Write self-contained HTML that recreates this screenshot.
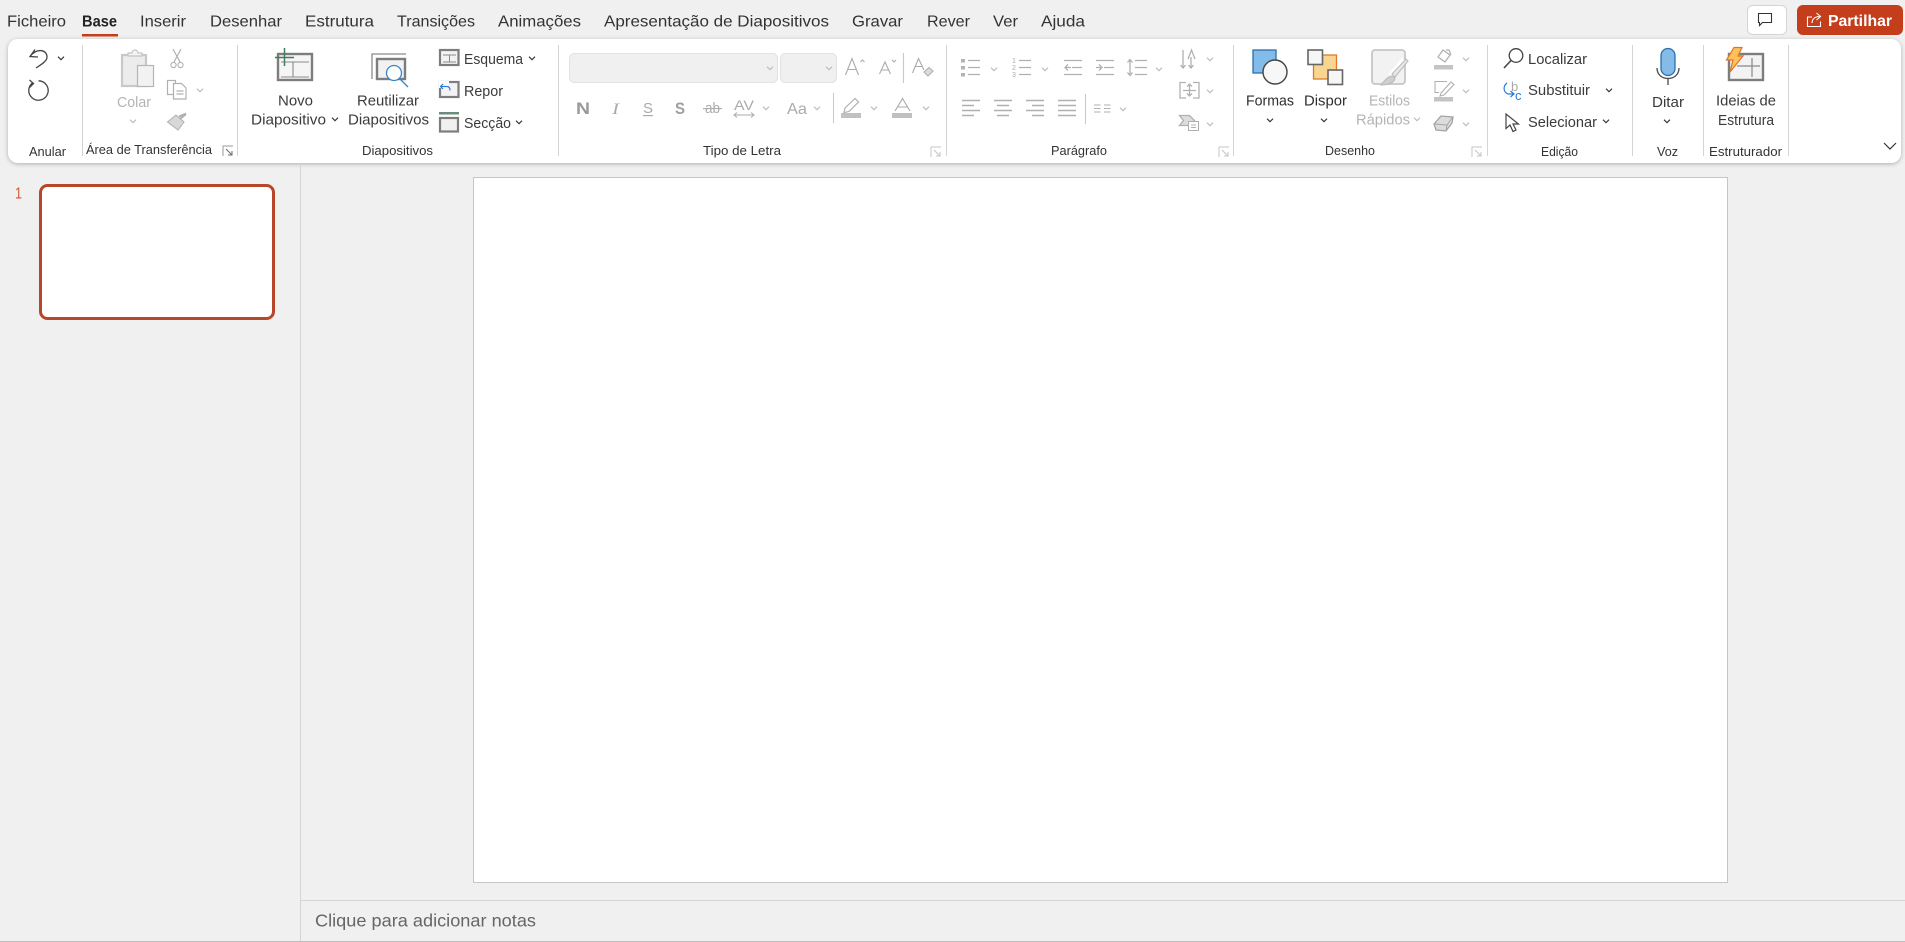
<!DOCTYPE html>
<html lang="pt"><head><meta charset="utf-8"><title>PowerPoint</title>
<style>
html,body{margin:0;padding:0;background:#f0f0f0;width:1905px;height:942px;overflow:hidden}
svg{display:block}
text{font-family:"Liberation Sans",sans-serif;font-size:15px;fill:#3b3b3b}
.tab{font-size:16px;fill:#333}
.g{font-size:13px;fill:#333}
.d{fill:#ababab}
</style></head><body>
<svg width="1905" height="942" viewBox="0 0 1905 942" xmlns="http://www.w3.org/2000/svg">
<defs>
<path id="c" d="M-3-1.300 0 1.700 3-1.300" fill="none" stroke-width="1.100"/>
<g id="l" fill="none" stroke="#9a9a9a" stroke-width="1"><path d="M-5 5V-5H5"/><path d="M-2-2 4 4M4 0V4H0" stroke="#6a6a6a"/></g>
<g id="ld" fill="none" stroke="#c4c4c4" stroke-width="1"><path d="M-5 5V-5H5"/><path d="M-2-2 4 4M4 0V4H0"/></g>
<filter id="s" x="-2%" y="-20%" width="104%" height="140%"><feDropShadow dx="0" dy="1" stdDeviation="2" flood-color="#000" flood-opacity=".28"/></filter>
</defs>
<rect width="1905" height="942" fill="#f0f0f0"/>

<!-- tabs -->
<text class="tab" x="7" y="26.500" textLength="59" lengthAdjust="spacingAndGlyphs">Ficheiro</text>
<text class="tab" x="82" y="26.500" textLength="35" lengthAdjust="spacingAndGlyphs" font-weight="700" style="fill:#222">Base</text>
<text class="tab" x="140" y="26.500" textLength="46" lengthAdjust="spacingAndGlyphs">Inserir</text>
<text class="tab" x="210" y="26.500" textLength="72" lengthAdjust="spacingAndGlyphs">Desenhar</text>
<text class="tab" x="305" y="26.500" textLength="69" lengthAdjust="spacingAndGlyphs">Estrutura</text>
<text class="tab" x="397" y="26.500" textLength="78" lengthAdjust="spacingAndGlyphs">Transições</text>
<text class="tab" x="498" y="26.500" textLength="83" lengthAdjust="spacingAndGlyphs">Animações</text>
<text class="tab" x="604" y="26.500" textLength="225" lengthAdjust="spacingAndGlyphs">Apresentação de Diapositivos</text>
<text class="tab" x="852" y="26.500" textLength="51" lengthAdjust="spacingAndGlyphs">Gravar</text>
<text class="tab" x="927" y="26.500" textLength="43" lengthAdjust="spacingAndGlyphs">Rever</text>
<text class="tab" x="993" y="26.500" textLength="25" lengthAdjust="spacingAndGlyphs">Ver</text>
<text class="tab" x="1041" y="26.500" textLength="44" lengthAdjust="spacingAndGlyphs">Ajuda</text>
<rect x="82" y="34" width="36" height="2.500" fill="#c43e1c"/>

<!-- comment + share -->
<rect x="1747.500" y="5.500" width="39" height="29" rx="5" fill="#fff" stroke="#d5d5d5"/>
<path d="M1758.500 13.500h13v9h-9l-3 3v-3h-1z" fill="none" stroke="#333" stroke-width="1.100"/>
<rect x="1797" y="5" width="106" height="30" rx="6" fill="#c43e1c"/>
<path d="M1812 17h-4.500v9.500h13v-5M1812 23c0-4 3-6.500 7.500-6.500M1816.500 13l4 3.500-4 3.500" fill="none" stroke="#fff" stroke-width="1.100"/>
<text x="1828" y="26" textLength="64" lengthAdjust="spacingAndGlyphs" font-weight="700" style="fill:#fff;font-size:15.500px">Partilhar</text>

<!-- ribbon -->
<rect x="8" y="39" width="1893" height="124" rx="10" fill="#fff" filter="url(#s)"/>
<g stroke="#d4d4d4" stroke-width="1">
<path d="M82.500 45V156M237.500 45V156M558.500 45V156M946.500 45V156M1233.500 45V156M1487.500 45V156M1632.500 45V156M1703.500 45V156M1788.500 45V156"/>
</g>

<!-- Anular -->
<path d="M35 49.500 30 56.500 38 57M30 56.500C36 48 47 49 47 57 47 61 42 64 36 68" fill="none" stroke="#444" stroke-width="1.300"/>
<use href="#c" x="61" y="58" stroke="#333"/>
<path d="M33 82.500A9.700 9.700 0 1 0 38.500 80.800M29.500 80 33.500 83.500 29.500 87.500" fill="none" stroke="#444" stroke-width="1.300"/>
<text class="g" x="29" y="156" textLength="37" lengthAdjust="spacingAndGlyphs">Anular</text>

<!-- Area de transferencia -->
<rect x="122" y="55" width="24" height="31" fill="#ececec" stroke="#c8c8c8" stroke-width="2.200"/>
<path d="M128 56v-3h4a3 3 0 0 1 6 0h4v3z" fill="#f4f4f4" stroke="#c4c4c4" stroke-width="1.200"/>
<rect x="137.500" y="65.500" width="16" height="21" fill="#f2f2f2" stroke="#b5b5b5" stroke-width="1.200"/>
<text class="d" x="117" y="107" textLength="34" lengthAdjust="spacingAndGlyphs" style="fill:#b4b4b4">Colar</text>
<use href="#c" x="133" y="121" stroke="#bcbcbc"/>
<path d="M173 49 180 62M181 49 174 62" fill="none" stroke="#b0b0b0" stroke-width="1.200"/>
<circle cx="173.500" cy="65" r="2.600" fill="none" stroke="#b0b0b0" stroke-width="1.100"/><circle cx="180.500" cy="65" r="2.600" fill="none" stroke="#b0b0b0" stroke-width="1.100"/>
<path d="M173 94.500h-5.500V80.500h8v3M173.500 83.500h8l4.500 4.500v11h-12.500zM176.500 91h7M176.500 94h7" fill="#fff" stroke="#b0b0b0" stroke-width="1.200"/>
<use href="#c" x="200" y="90" stroke="#bcbcbc"/>
<path d="M167.500 122 176 115 184 122 178 130z" fill="#d8d8d8" stroke="#b0b0b0"/><path d="M179 116.500 186 113.500M180 119 186 114" stroke="#b0b0b0" stroke-width="2" fill="none"/>
<text class="g" x="86" y="154" textLength="126" lengthAdjust="spacingAndGlyphs">Área de Transferência</text>
<use href="#l" x="228" y="151"/>

<!-- Diapositivos -->
<rect x="278" y="54" width="34" height="26" fill="#f5f5f5" stroke="#7d7d7d" stroke-width="2.400"/>
<path d="M281 62h28M293 62v15M281 77h28" fill="none" stroke="#8a8a8a" stroke-width="1.100"/>
<path d="M284.500 48V66M275 57.500H294" stroke="#3f7d63" stroke-width="1.500" fill="none"/>
<text x="278" y="105.500" textLength="35" lengthAdjust="spacingAndGlyphs">Novo</text>
<text x="251" y="124.500" textLength="75" lengthAdjust="spacingAndGlyphs">Diapositivo</text>
<use href="#c" x="335" y="119" stroke="#333"/>
<path d="M406 54H372V79" fill="none" stroke="#8a8a8a" stroke-width="1.300"/>
<rect x="377" y="59" width="28" height="20" fill="#f2f2f2" stroke="#7d7d7d" stroke-width="2.400"/>
<circle cx="394" cy="73" r="7.500" fill="#fff" stroke="#3a86c8" stroke-width="1.300"/><path d="M399.500 78.500 408 87" stroke="#3a86c8" stroke-width="1.300"/>
<text x="357" y="105.500" textLength="62" lengthAdjust="spacingAndGlyphs">Reutilizar</text>
<text x="348" y="124.500" textLength="81" lengthAdjust="spacingAndGlyphs">Diapositivos</text>
<rect x="440" y="50" width="18.500" height="15" fill="#f3f3f3" stroke="#7d7d7d" stroke-width="2.200"/><path d="M443 55h13M449.500 55v7M443 62h13" stroke="#888" fill="none"/>
<text x="464" y="64" textLength="59" lengthAdjust="spacingAndGlyphs">Esquema</text><use href="#c" x="532" y="58" stroke="#333"/>
<rect x="440" y="82" width="18.500" height="15" fill="#f3f3f3" stroke="#7d7d7d" stroke-width="2.200"/>
<path d="M439 81h10v7h-10z" fill="#fff"/><path d="M443 84 440.500 86.500 443 89M441 86.500h6c2 0 3 1.500 3 4" fill="none" stroke="#2b7cd3" stroke-width="1.200"/>
<text x="464" y="96" textLength="39" lengthAdjust="spacingAndGlyphs">Repor</text>
<rect x="439" y="112" width="20" height="2.500" fill="#6c8c7c"/><rect x="440" y="118" width="18" height="13.500" fill="#f0f0f0" stroke="#7d7d7d" stroke-width="2.200"/>
<text x="464" y="128" textLength="47" lengthAdjust="spacingAndGlyphs">Secção</text><use href="#c" x="519" y="122" stroke="#333"/>
<text class="g" x="362" y="155" textLength="71" lengthAdjust="spacingAndGlyphs">Diapositivos</text>

<!-- Tipo de letra -->
<rect x="569.500" y="53.500" width="208" height="29" rx="5" fill="#f0f0f0" stroke="#e2e2e2"/>
<rect x="780.500" y="53.500" width="56" height="29" rx="5" fill="#f0f0f0" stroke="#e2e2e2"/>
<use href="#c" x="770" y="68" stroke="#bcbcbc"/><use href="#c" x="829" y="68" stroke="#bcbcbc"/>
<g fill="none" stroke="#ababab" stroke-width="1.100">
<path d="M845.500 75 852 58.500 858.500 75M848 69.500H856M860.500 62 862.500 60 864.500 62"/>
<path d="M879.500 74 885 62 890.500 74M881.500 70H888.500M892 60 894 62 896 60"/>
<path d="M903.500 53V83" stroke="#c8c8c8"/>
<path d="M912.500 73 918.500 58.500 924 70M915 66.500H922"/>
</g>
<path d="M924 72 929 67.500 933 71 928 76z" fill="#dcdcdc" stroke="#ababab"/>
<text x="576" y="114" font-weight="700" textLength="14" lengthAdjust="spacingAndGlyphs" style="font-size:17px;fill:#9a9a9a">N</text>
<text class="d" x="612" y="114" font-style="italic" textLength="7" lengthAdjust="spacingAndGlyphs" style="font-size:16px;font-family:'Liberation Serif',serif">I</text>
<text class="d" x="643" y="113" textLength="10" lengthAdjust="spacingAndGlyphs" style="font-size:15px">S</text><rect x="643" y="115" width="10" height="1.200" fill="#ababab"/>
<text x="675" y="114" font-weight="700" textLength="10" lengthAdjust="spacingAndGlyphs" style="font-size:17px;fill:#9f9f9f">S</text>
<text class="d" x="705" y="113" textLength="15" lengthAdjust="spacingAndGlyphs" style="font-size:15px">ab</text><rect x="703" y="108" width="19" height="1.100" fill="#ababab"/>
<text class="d" x="734" y="110" textLength="20" lengthAdjust="spacingAndGlyphs" style="font-size:14px">AV</text>
<path d="M734 115h20M737 112.500 734 115 737 117.500M751 112.500 754 115 751 117.500" fill="none" stroke="#ababab"/>
<use href="#c" x="766" y="108" stroke="#bcbcbc"/>
<text class="d" x="787" y="114" textLength="20" lengthAdjust="spacingAndGlyphs" style="font-size:16px">Aa</text>
<use href="#c" x="817" y="108" stroke="#bcbcbc"/>
<path d="M833.500 93V123" stroke="#c8c8c8"/>
<path d="M845 108 855 98.500 858.500 102 849 111.500 844 112.500z" fill="#fff" stroke="#ababab" stroke-width="1.100"/>
<rect x="841" y="113" width="20" height="5" fill="#c0c0c0"/><use href="#c" x="874" y="108" stroke="#bcbcbc"/>
<path d="M895 111 902.500 98.500 910 111M897.500 107H907.500" fill="none" stroke="#ababab" stroke-width="1.100"/>
<rect x="892" y="113" width="20" height="5" fill="#c0c0c0"/><use href="#c" x="926" y="108" stroke="#bcbcbc"/>
<text class="g" x="703" y="155" textLength="78" lengthAdjust="spacingAndGlyphs">Tipo de Letra</text>
<use href="#ld" x="936" y="152"/>

<!-- Paragrafo -->
<g fill="#b4b4b4">
<rect x="961" y="59" width="4" height="3.500"/><rect x="961" y="66" width="4" height="3.500"/><rect x="961" y="73" width="4" height="3.500"/>
</g>
<g stroke="#b0b0b0" stroke-width="1.300" fill="none">
<path d="M968 60.500h12M968 67.500h12M968 74.500h12"/>
<path d="M1019 60.500h12M1019 67.500h12M1019 74.500h12"/>
<path d="M1064 60.500h18M1072 67.500h10M1064 74.500h18M1071 67.500h-6M1068 64.500l-3 3 3 3"/>
<path d="M1096 60.500h18M1104 67.500h10M1096 74.500h18M1096 67.500h6M1099 64.500l3 3-3 3"/>
<path d="M1135 60.500h12M1135 67.500h12M1135 74.500h12M1130 60v15M1127.500 62.500l2.500-3 2.500 3M1127.500 72.500l2.500 3 2.500-3"/>
<path d="M962 100.500h18M962 105.500h12M962 110.500h18M962 115.500h12" stroke-width="1.500"/>
<path d="M994 100.500h18M997 105.500h12M994 110.500h18M997 115.500h12" stroke-width="1.500"/>
<path d="M1026 100.500h18M1032 105.500h12M1026 110.500h18M1032 115.500h12" stroke-width="1.500"/>
<path d="M1058 100.500h18M1058 105.500h18M1058 110.500h18M1058 115.500h18" stroke-width="1.500"/>
<path d="M1094 105h6.500M1094 108.500h6.500M1094 112h6.500M1104 105h6.500M1104 108.500h6.500M1104 112h6.500" stroke-width="1"/>
<path d="M1183 50v18M1180.500 65l2.500 3 2.500-3M1191 57v11M1188.500 65l2.500 3 2.500-3M1188 59l3.500-9 3.500 9"/>
<path d="M1186 82.500h-6v15.500h6M1193 82.500h6v15.500h-6M1189.500 84v12M1187 86.500l2.500-2.500 2.500 2.500M1187 93.500l2.500 2.500 2.500-2.500M1183 90.500h13"/>
<path d="M1179.500 115.500h10l5 5-5 5h-10l4-5z" fill="#ddd"/>
</g>
<rect x="1188.500" y="121.500" width="10" height="9" fill="#fff" stroke="#b0b0b0"/>
<path d="M1191 125h5M1191 127.500h5" stroke="#b0b0b0"/>
<use href="#c" x="994" y="69" stroke="#bcbcbc"/><use href="#c" x="1045" y="69" stroke="#bcbcbc"/><use href="#c" x="1159" y="69" stroke="#bcbcbc"/>
<use href="#c" x="1123" y="109" stroke="#bcbcbc"/><use href="#c" x="1210" y="59" stroke="#bcbcbc"/><use href="#c" x="1210" y="91" stroke="#bcbcbc"/><use href="#c" x="1210" y="124" stroke="#bcbcbc"/>
<text class="d" x="1012" y="63" style="font-size:7px">1</text><text class="d" x="1012" y="70" style="font-size:7px">2</text><text class="d" x="1012" y="77" style="font-size:7px">3</text>
<path d="M1085.500 94V124" stroke="#c8c8c8"/>
<text class="g" x="1051" y="155" textLength="56" lengthAdjust="spacingAndGlyphs">Parágrafo</text>
<use href="#ld" x="1224" y="152"/>

<!-- Desenho -->
<rect x="1253" y="50" width="23" height="23" fill="#83bce8" stroke="#2d6fa8" stroke-width="1.300"/>
<circle cx="1275" cy="72" r="12" fill="#f7f7f7" stroke="#444" stroke-width="1.400"/>
<text x="1246" y="105.500" textLength="48" lengthAdjust="spacingAndGlyphs" style="fill:#2e2e2e">Formas</text>
<use href="#c" x="1270" y="120" stroke="#333"/>
<rect x="1313.500" y="55" width="23" height="24" fill="#f6d690" stroke="#df7a2e" stroke-width="1.300"/>
<rect x="1308" y="50" width="14.500" height="14.500" fill="#f6f6f6" stroke="#666" stroke-width="1.600"/>
<rect x="1328" y="70" width="14.500" height="14.500" fill="#f6f6f6" stroke="#666" stroke-width="1.600"/>
<text x="1304" y="105.500" textLength="43" lengthAdjust="spacingAndGlyphs" style="fill:#2e2e2e">Dispor</text>
<use href="#c" x="1324" y="120" stroke="#333"/>
<rect x="1372" y="50" width="33" height="34" rx="3" fill="#f2f2f2" stroke="#c6c6c6" stroke-width="1.800"/>
<path d="M1404 60 1391 76" stroke="#fff" stroke-width="6"/><path d="M1392 74 1406 59 1408 61 1395 77z" fill="#e8e8e8" stroke="#bcbcbc" stroke-width="1.100"/>
<path d="M1381 85c3-4 7-9 11-9l3 2c0 4-6 7-14 7z" fill="#cfcfcf" stroke="#b8b8b8"/>
<text class="d" x="1369" y="105.500" textLength="41" lengthAdjust="spacingAndGlyphs" style="fill:#b4b4b4">Estilos</text>
<text class="d" x="1356" y="124.500" textLength="54" lengthAdjust="spacingAndGlyphs" style="fill:#b4b4b4">Rápidos</text>
<use href="#c" x="1417" y="119" stroke="#bcbcbc"/>
<path d="M1438 57 1443 50 1450 55 1445 62z" fill="#fff" stroke="#b0b0b0" stroke-width="1.200"/><path d="M1446 50h3l2 5" fill="none" stroke="#b0b0b0" stroke-width="1.200"/>
<rect x="1434" y="65" width="19" height="4.500" fill="#c4c4c4"/><use href="#c" x="1466" y="59" stroke="#bcbcbc"/>
<path d="M1447 81.500h-12v11h4M1441 93 1451 82 1454 84.500 1444 95 1440 96z" fill="#fff" stroke="#b0b0b0" stroke-width="1.100"/>
<rect x="1434" y="97" width="19" height="4.500" fill="#c4c4c4"/><use href="#c" x="1466" y="91" stroke="#bcbcbc"/>
<path d="M1434 124 1441 116 1453 117 1452 123 1446 131 1436 130z" fill="#dcdcdc" stroke="#a4a4a4" stroke-width="1.300"/><path d="M1434.500 124 1447 125 1452 118M1447 125 1446 131" fill="none" stroke="#a4a4a4"/>
<use href="#c" x="1466" y="124" stroke="#bcbcbc"/>
<text class="g" x="1325" y="155" textLength="50" lengthAdjust="spacingAndGlyphs">Desenho</text>
<use href="#ld" x="1477" y="152"/>

<!-- Edicao -->
<circle cx="1516" cy="55.500" r="6.800" fill="none" stroke="#444" stroke-width="1.300"/><path d="M1511 60.500 1504 68" stroke="#444" stroke-width="1.600"/>
<text x="1528" y="64" textLength="59" lengthAdjust="spacingAndGlyphs">Localizar</text>
<text x="1511" y="91" class="d" style="font-size:13px">b</text>
<text x="1515" y="100" style="font-size:13px;fill:#2b7cd3">c</text>
<path d="M1507 83c-4 3-4 9 1 11h6M1510.500 91l3.500 3-3.500 3" fill="none" stroke="#2b7cd3" stroke-width="1.200"/>
<text x="1528" y="95" textLength="62" lengthAdjust="spacingAndGlyphs">Substituir</text><use href="#c" x="1609" y="90" stroke="#333"/>
<path d="M1506 114V128.500L1510 125 1513 131.500 1516 130 1513 124H1518.500z" fill="#fff" stroke="#444" stroke-width="1.200"/>
<text x="1528" y="127" textLength="69" lengthAdjust="spacingAndGlyphs">Selecionar</text><use href="#c" x="1606" y="121" stroke="#333"/>
<text class="g" x="1541" y="156" textLength="37" lengthAdjust="spacingAndGlyphs">Edição</text>

<!-- Voz -->
<rect x="1661" y="48.500" width="14" height="27" rx="7" fill="#83bce8" stroke="#2d6fa8" stroke-width="1.300"/>
<path d="M1657 68c0 14 22 14 22 0M1668 79v6" fill="none" stroke="#555" stroke-width="1.400"/>
<text x="1652" y="107" textLength="32" lengthAdjust="spacingAndGlyphs">Ditar</text>
<use href="#c" x="1667" y="121" stroke="#333"/>
<text class="g" x="1657" y="156" textLength="21" lengthAdjust="spacingAndGlyphs">Voz</text>

<!-- Estruturador -->
<rect x="1729" y="54" width="34" height="26" fill="#f3f3f3" stroke="#7d7d7d" stroke-width="2.400"/>
<path d="M1737 66h23M1752 58v19" fill="none" stroke="#888" stroke-width="1.200"/>
<path d="M1734 47.500H1742L1738 56H1743L1730 72 1733 60H1726.500z" fill="#fbc25a" stroke="#e0742a" stroke-width="1.200"/>
<text x="1716" y="105.500" textLength="60" lengthAdjust="spacingAndGlyphs">Ideias de</text>
<text x="1718" y="125" textLength="56" lengthAdjust="spacingAndGlyphs">Estrutura</text>
<text class="g" x="1709" y="156" textLength="73" lengthAdjust="spacingAndGlyphs">Estruturador</text>
<path d="M1884 143 1890 149 1896 143" fill="none" stroke="#333" stroke-width="1.200"/>

<!-- panels -->
<path d="M300.500 165V942" stroke="#d4d4d4"/>
<text x="15" y="198.500" textLength="7" lengthAdjust="spacingAndGlyphs" style="font-size:16px;fill:#d0592a">1</text>
<rect x="40.500" y="185.500" width="233" height="133" rx="7" fill="#fff" stroke="#b7472a" stroke-width="3"/>
<rect x="473.500" y="177.500" width="1254" height="705" fill="#fff" stroke="#c6c6c6"/>
<path d="M301 900.500H1905" stroke="#d4d4d4"/>
<path d="M0 941.500H1905" stroke="#bcbcbc"/>
<text x="315" y="926.500" textLength="221" lengthAdjust="spacingAndGlyphs" style="font-size:17.500px;fill:#666">Clique para adicionar notas</text>
</svg>
</body></html>
